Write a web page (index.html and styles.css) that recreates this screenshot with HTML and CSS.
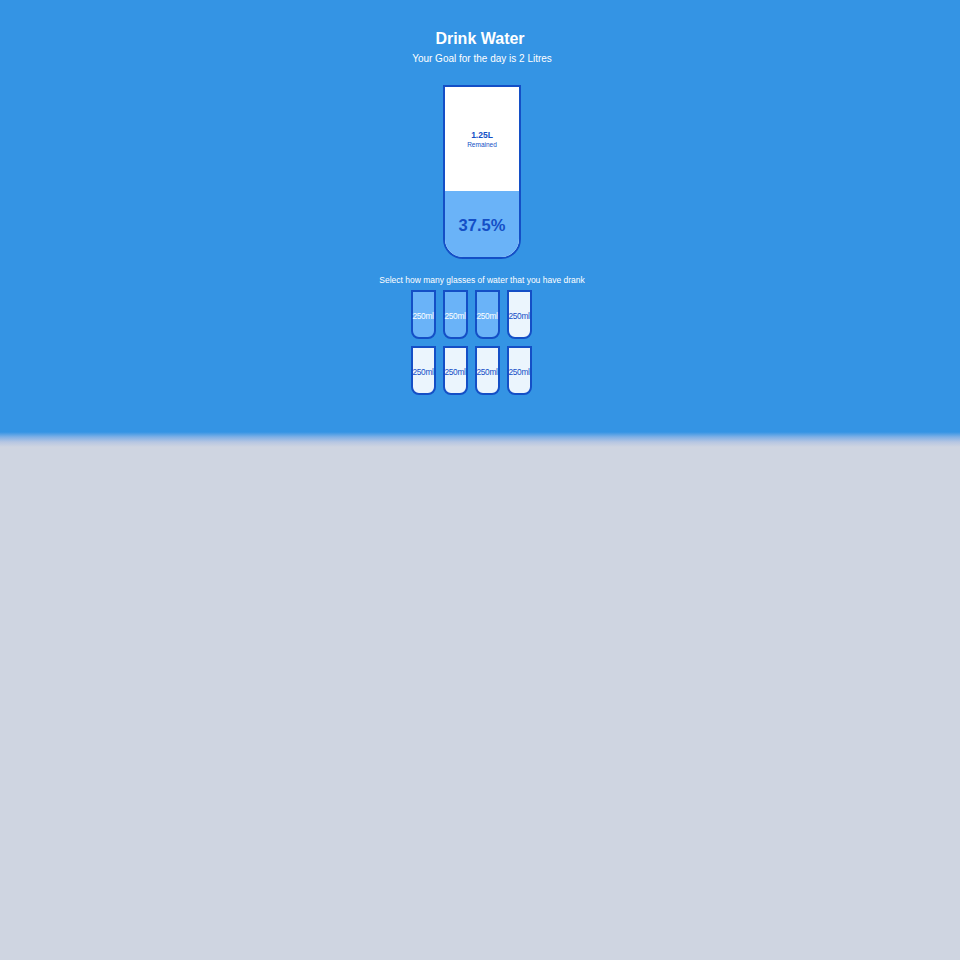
FILE: index.html
```html
<!DOCTYPE html>
<html lang="en">
<head>
<meta charset="UTF-8">
<title>Drink Water</title>
<link rel="stylesheet" href="styles.css">
</head>
<body>
<div class="app">
  <h1 class="title">Drink Water</h1>
  <h3 class="subtitle">Your Goal for the day is 2 Litres</h3>
  <div class="cup">
    <div class="remained">
      <span class="liters">1.25L</span>
      <small class="remained-label">Remained</small>
    </div>
    <div class="percentage">37.5%</div>
  </div>
  <p class="text">Select how many glasses of water that you have drank</p>
  <div class="cups">
    <div class="cup-small full">250ml</div>
    <div class="cup-small full">250ml</div>
    <div class="cup-small full">250ml</div>
    <div class="cup-small">250ml</div>
    <div class="cup-small">250ml</div>
    <div class="cup-small">250ml</div>
    <div class="cup-small">250ml</div>
    <div class="cup-small">250ml</div>
  </div>
</div>
</body>
</html>
```

FILE: styles.css
```css
html {
  background: #cfd5e1;
}
body {
  margin: 0;
  font-family: "Liberation Sans", Arial, sans-serif;
  color: #fff;
}
.app {
  background: linear-gradient(to bottom, #3494e4 0, #3494e4 calc(100% - 15px), #7fb0e6 calc(100% - 10px), #b6c6e2 calc(100% - 5px), #cfd5e1 100%);
  display: flex;
  flex-direction: column;
  align-items: center;
  padding: 29px 0 52px 4px;
}
.title {
  margin: 0 4px 0 0;
  font-size: 16px;
  line-height: 20px;
  font-weight: bold;
}
.subtitle {
  margin: 3px 0 0;
  font-size: 10px;
  line-height: 14px;
  font-weight: 400;
}
.cup {
  margin-top: 19px;
  box-sizing: border-box;
  width: 78px;
  height: 174px;
  background: #fff;
  border: 2px solid #144fc6;
  border-radius: 0 0 20px 20px;
  color: #144fc6;
  display: flex;
  flex-direction: column;
  overflow: hidden;
}
.remained {
  flex: 1;
  display: flex;
  flex-direction: column;
  align-items: center;
  justify-content: center;
  text-align: center;
}
.liters {
  font-size: 8.5px;
  line-height: 11px;
  font-weight: bold;
}
.remained-label {
  font-size: 6.5px;
  line-height: 8px;
}
.percentage {
  box-sizing: border-box;
  height: 66px;
  padding-top: 3px;
  background: #6ab3f8;
  display: flex;
  align-items: center;
  justify-content: center;
  font-size: 16.5px;
  font-weight: bold;
}
.text {
  margin: 15px 0 0;
  font-size: 8.5px;
  line-height: 12px;
  text-align: center;
}
.cups {
  margin: 4px 22px 0 0;
  display: grid;
  grid-template-columns: repeat(4, 25px);
  gap: 7px;
}
.cup-small {
  box-sizing: border-box;
  width: 25px;
  height: 49px;
  padding-top: 2px;
  border: 2px solid #144fc6;
  border-radius: 0 0 8px 8px;
  background: rgba(255, 255, 255, 0.9);
  color: #144fc6;
  font-size: 8.3px;
  display: flex;
  align-items: center;
  justify-content: center;
  text-align: center;
  white-space: nowrap;
  letter-spacing: -0.3px;
}
.cup-small.full {
  background: #6ab3f8;
  color: #fff;
}
```
